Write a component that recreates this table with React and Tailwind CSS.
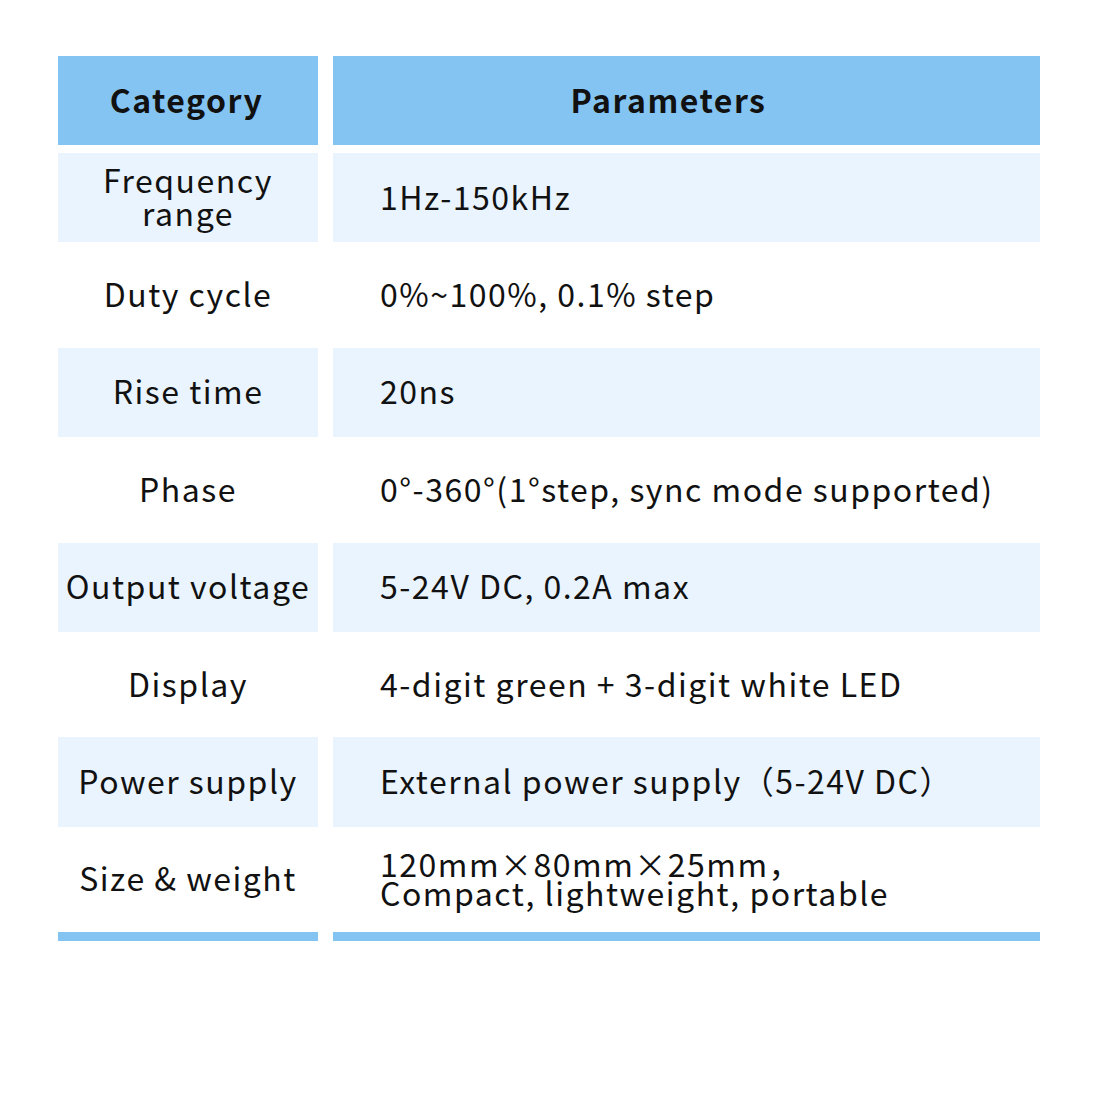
import React from "react";

const rows = [
  { c: ["Frequency", "range"], p: ["1Hz-150kHz"] },
  { c: ["Duty cycle"], p: ["0%~100%, 0.1% step"] },
  { c: ["Rise time"], p: ["20ns"] },
  { c: ["Phase"], p: ["0°-360°(1°step, sync mode supported)"] },
  { c: ["Output voltage"], p: ["5-24V DC, 0.2A max"] },
  { c: ["Display"], p: ["4-digit green + 3-digit white LED"] },
  { c: ["Power supply"], p: ["External power supply（5-24V DC）"] },
  { c: ["Size & weight"], p: ["120mm×80mm×25mm，", "Compact, lightweight, portable"] },
];

export default function App() {
  return (
    <div
      className="w-[1100px] h-[1100px] bg-white pt-[56px] pl-[58px] text-[#111]"
      style={{ fontFamily: '"Noto Sans CJK SC", "Noto Sans", sans-serif' }}
    >
      <div className="w-[982px] flex flex-col gap-[8px]">
        <div className="flex gap-[15px] h-[89px]">
          <div className="w-[260px] bg-[#84c4f3] flex items-center justify-center pb-[3px] pr-[3px] text-[32px] font-bold tracking-[1.5px]">
            Category
          </div>
          <div className="flex-1 bg-[#84c4f3] flex items-center justify-center pb-[3px] pr-[36px] text-[32px] font-bold tracking-[1.5px]">
            Parameters
          </div>
        </div>
        {rows.map((r, i) => {
          const bg = i % 2 === 0 ? "bg-[#eaf4fe]" : "bg-white";
          return (
            <div key={i} className="flex gap-[15px] h-[89.4px]">
              <div className={`w-[260px] ${bg} flex flex-col items-center justify-center pb-[3px] text-[32px] leading-[33px] tracking-[1.5px] text-center whitespace-nowrap`}>
                {r.c.map((t, j) => (
                  <div key={j}>{t}</div>
                ))}
              </div>
              <div className={`flex-1 ${bg} flex flex-col justify-center pb-[3px] pl-[47px] text-[32px] leading-[29px] tracking-[1.5px] whitespace-nowrap`}>
                {r.p.map((t, j) => (
                  <div key={j}>{t}</div>
                ))}
              </div>
            </div>
          );
        })}
        <div className="flex gap-[15px] h-[9px]">
          <div className="w-[260px] bg-[#84c4f3]" />
          <div className="flex-1 bg-[#84c4f3]" />
        </div>
      </div>
    </div>
  );
}
